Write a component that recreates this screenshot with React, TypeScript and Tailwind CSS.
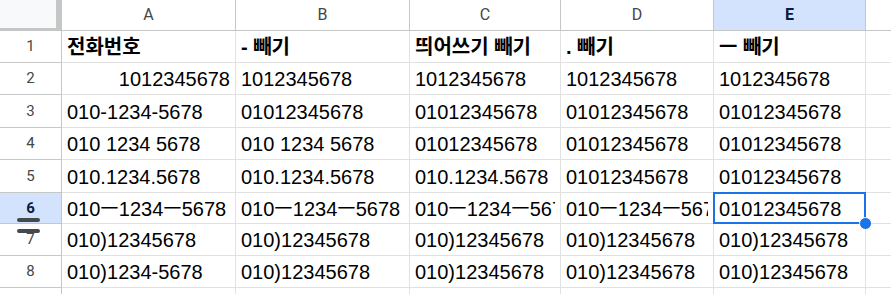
import React from "react";

const cols = ["A", "B", "C", "D", "E"];

const rows: { text: string; right?: boolean }[][] = [
  [{ text: "전화번호" }, { text: "- 빼기" }, { text: "띄어쓰기 빼기" }, { text: ". 빼기" }, { text: "ㅡ 빼기" }],
  [{ text: "1012345678", right: true }, { text: "1012345678" }, { text: "1012345678" }, { text: "1012345678" }, { text: "1012345678" }],
  [{ text: "010-1234-5678" }, { text: "01012345678" }, { text: "01012345678" }, { text: "01012345678" }, { text: "01012345678" }],
  [{ text: "010 1234 5678" }, { text: "010 1234 5678" }, { text: "01012345678" }, { text: "01012345678" }, { text: "01012345678" }],
  [{ text: "010.1234.5678" }, { text: "010.1234.5678" }, { text: "010.1234.5678" }, { text: "01012345678" }, { text: "01012345678" }],
  [{ text: "010ㅡ1234ㅡ5678" }, { text: "010ㅡ1234ㅡ5678" }, { text: "010ㅡ1234ㅡ5678" }, { text: "010ㅡ1234ㅡ5678" }, { text: "01012345678" }],
  [{ text: "010)12345678" }, { text: "010)12345678" }, { text: "010)12345678" }, { text: "010)12345678" }, { text: "010)12345678" }],
  [{ text: "010)1234-5678" }, { text: "010)12345678" }, { text: "010)12345678" }, { text: "010)12345678" }, { text: "010)12345678" }],
];

export default function App() {
  return (
    <div
      className="w-[891px] h-[294px] overflow-hidden bg-white"
      style={{ fontFamily: '"Liberation Sans", Arial, "Noto Sans CJK KR", sans-serif' }}
    >
      <div className="grid grid-cols-[62px_174px_174px_151px_153px_152px_1fr] grid-rows-[31px_32px_32px_33px_32px_33px_31px_32px_32px_32px]">
        {/* corner */}
        <div className="bg-[#c4c7c5] relative">
          <div className="w-[56px] h-[28px] bg-[#f8f9fa]" />
        </div>
        {cols.map((c) => (
          <div
            key={c}
            className={
              "flex items-center justify-center border-r border-b border-[#c4c7c5] text-[16px] " +
              (c === "E" ? "bg-[#d3e3fd] font-bold text-[#0b1b3f]" : "bg-white text-[#444746]")
            }
            style={{ fontFamily: "Roboto, Arial, sans-serif" }}
          >
            {c}
          </div>
        ))}
        <div className="border-b border-[#c4c7c5] bg-white" />

        {[...rows, null].map((row, ri) => {
          const n = ri + 1;
          const sel = n === 6;
          return (
            <React.Fragment key={ri}>
              <div
                className={
                  "relative flex items-center justify-center border-r border-b border-[#c4c7c5] text-[15px] " +
                  (sel ? "bg-[#d3e3fd] font-bold text-[#0b1b3f]" : "bg-white text-[#444746]")
                }
                style={{ fontFamily: "Roboto, Arial, sans-serif" }}
              >
                {row ? n : ""}
                {sel && (
                  <>
                    <div className="absolute left-[17px] top-[25px] w-[23px] h-[4px] rounded-full bg-[#474a4d] z-10" />
                    <div className="absolute left-[17px] top-[36px] w-[23px] h-[4px] rounded-full bg-[#474a4d] z-10" />
                  </>
                )}
              </div>
              {(row ?? [{}, {}, {}, {}, {}]).map((cell: { text?: string; right?: boolean }, ci: number) => {
                const active = sel && ci === 4;
                return (
                  <div
                    key={ci}
                    className={
                      "relative flex items-center border-r border-b border-[#e1e1e1] px-[5px] pt-[1px] text-[20px] text-black whitespace-nowrap " +
                      (n === 1 ? "font-bold " : "") +
                      (cell.right ? "justify-end" : "justify-start")
                    }
                  >
                    <span className="block overflow-hidden">{cell.text}</span>
                    {active && (
                      <>
                        <div className="absolute -top-[1px] -left-[1px] -right-[1px] -bottom-[1px] border-2 border-[#1a73e8] z-10" />
                        <div className="absolute -right-[7px] -bottom-[7px] w-[13px] h-[13px] rounded-full bg-[#1a73e8] border border-white z-20" />
                      </>
                    )}
                  </div>
                );
              })}
              <div className="border-b border-[#e1e1e1] bg-white" />
            </React.Fragment>
          );
        })}
      </div>
    </div>
  );
}
